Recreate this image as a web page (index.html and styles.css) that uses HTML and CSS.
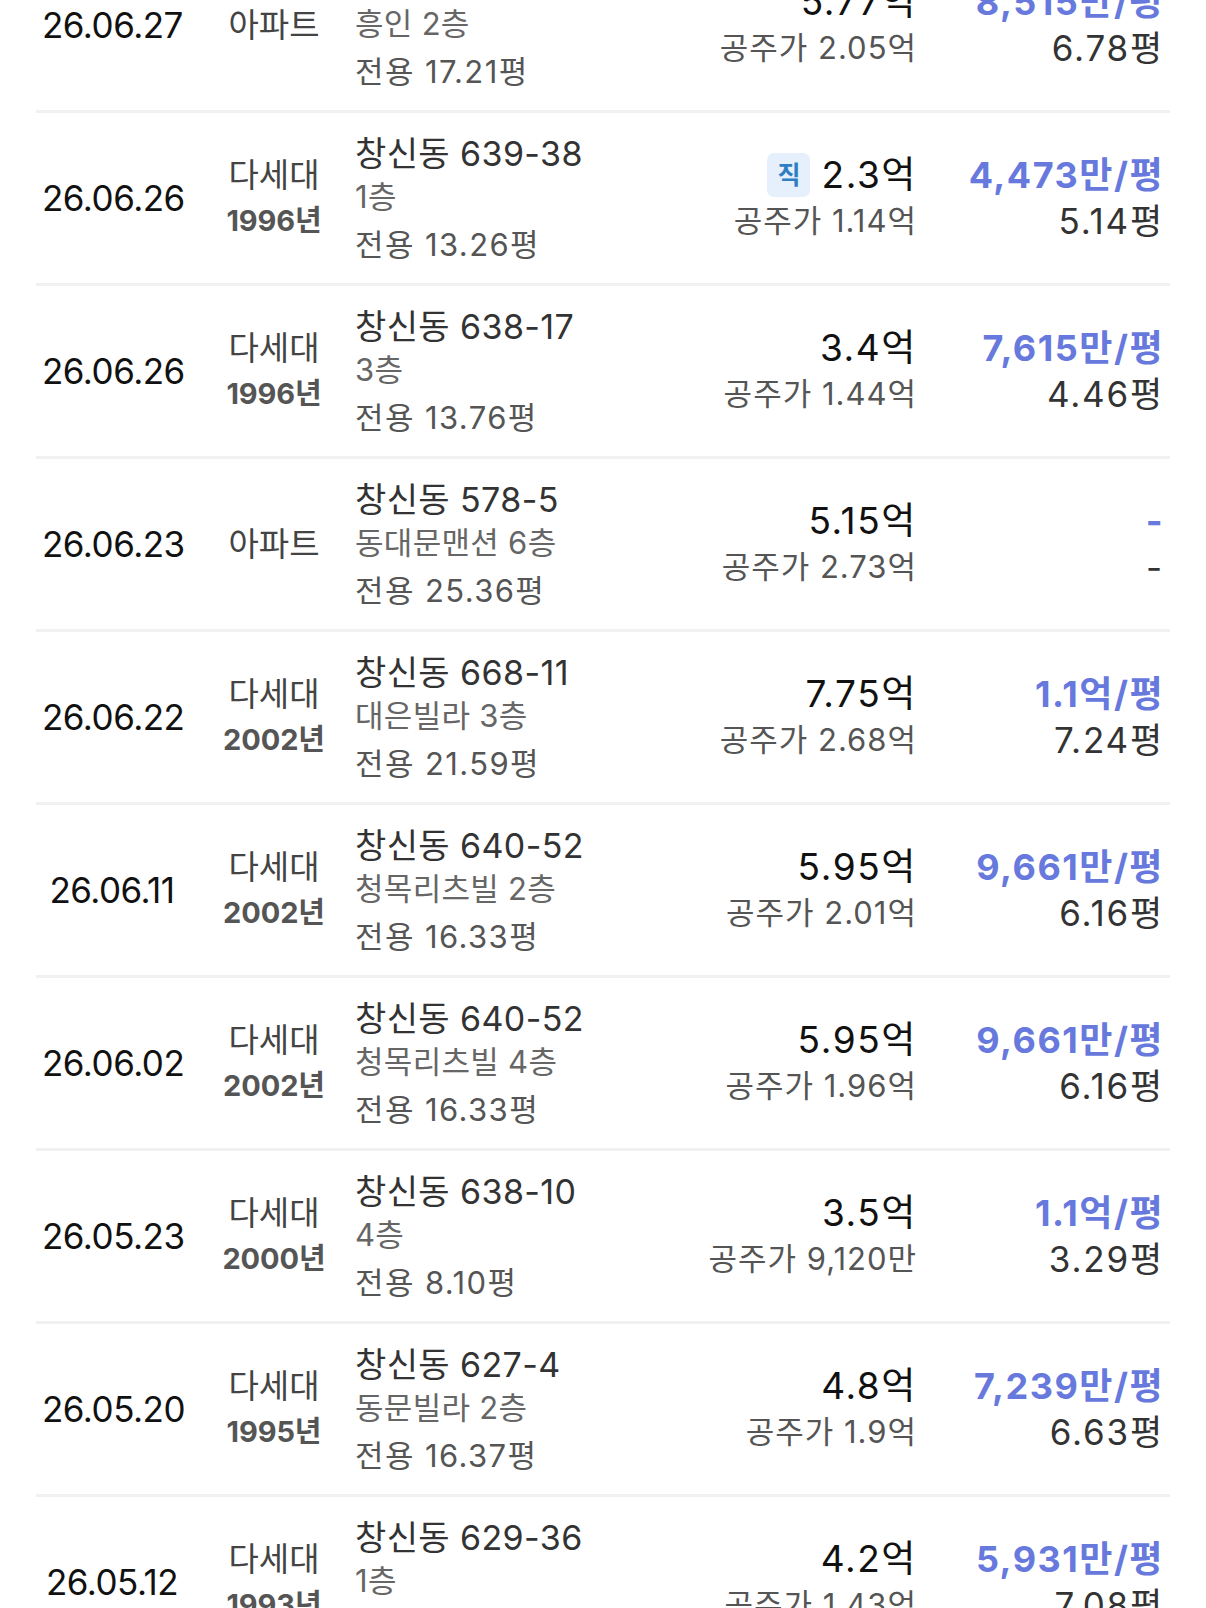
FILE: index.html
```html
<!DOCTYPE html>
<html lang="ko">
<head>
<meta charset="utf-8">
<title>실거래가 목록</title>
<link rel="stylesheet" href="styles.css">
</head>
<body>
<div class="list">
  <div class="row">
    <div class="c-date">26.06.27</div>
    <div class="c-type"><div class="type">아파트</div></div>
    <div class="c-addr"><div class="a1">창신동 703</div><div class="a2">흥인 2층</div><div class="a3">전용 17.21평</div></div>
    <div class="c-price"><div class="p1">5.77억</div><div class="p2">공주가 2.05억</div></div>
    <div class="c-ppy"><div class="u1">8,515만/평</div><div class="u2">6.78평</div></div>
  </div>
  <div class="row">
    <div class="c-date">26.06.26</div>
    <div class="c-type"><div class="type">다세대</div><div class="year">1996년</div></div>
    <div class="c-addr"><div class="a1">창신동 639-38</div><div class="a2">1층</div><div class="a3">전용 13.26평</div></div>
    <div class="c-price"><div class="p1"><span class="badge">직</span>2.3억</div><div class="p2">공주가 1.14억</div></div>
    <div class="c-ppy"><div class="u1">4,473만/평</div><div class="u2">5.14평</div></div>
  </div>
  <div class="row">
    <div class="c-date">26.06.26</div>
    <div class="c-type"><div class="type">다세대</div><div class="year">1996년</div></div>
    <div class="c-addr"><div class="a1">창신동 638-17</div><div class="a2">3층</div><div class="a3">전용 13.76평</div></div>
    <div class="c-price"><div class="p1">3.4억</div><div class="p2">공주가 1.44억</div></div>
    <div class="c-ppy"><div class="u1">7,615만/평</div><div class="u2">4.46평</div></div>
  </div>
  <div class="row">
    <div class="c-date">26.06.23</div>
    <div class="c-type"><div class="type">아파트</div></div>
    <div class="c-addr"><div class="a1">창신동 578-5</div><div class="a2">동대문맨션 6층</div><div class="a3">전용 25.36평</div></div>
    <div class="c-price"><div class="p1">5.15억</div><div class="p2">공주가 2.73억</div></div>
    <div class="c-ppy"><div class="u1">-</div><div class="u2">-</div></div>
  </div>
  <div class="row">
    <div class="c-date">26.06.22</div>
    <div class="c-type"><div class="type">다세대</div><div class="year">2002년</div></div>
    <div class="c-addr"><div class="a1">창신동 668-11</div><div class="a2">대은빌라 3층</div><div class="a3">전용 21.59평</div></div>
    <div class="c-price"><div class="p1">7.75억</div><div class="p2">공주가 2.68억</div></div>
    <div class="c-ppy"><div class="u1">1.1억/평</div><div class="u2">7.24평</div></div>
  </div>
  <div class="row">
    <div class="c-date">26.06.11</div>
    <div class="c-type"><div class="type">다세대</div><div class="year">2002년</div></div>
    <div class="c-addr"><div class="a1">창신동 640-52</div><div class="a2">청목리츠빌 2층</div><div class="a3">전용 16.33평</div></div>
    <div class="c-price"><div class="p1">5.95억</div><div class="p2">공주가 2.01억</div></div>
    <div class="c-ppy"><div class="u1">9,661만/평</div><div class="u2">6.16평</div></div>
  </div>
  <div class="row">
    <div class="c-date">26.06.02</div>
    <div class="c-type"><div class="type">다세대</div><div class="year">2002년</div></div>
    <div class="c-addr"><div class="a1">창신동 640-52</div><div class="a2">청목리츠빌 4층</div><div class="a3">전용 16.33평</div></div>
    <div class="c-price"><div class="p1">5.95억</div><div class="p2">공주가 1.96억</div></div>
    <div class="c-ppy"><div class="u1">9,661만/평</div><div class="u2">6.16평</div></div>
  </div>
  <div class="row">
    <div class="c-date">26.05.23</div>
    <div class="c-type"><div class="type">다세대</div><div class="year">2000년</div></div>
    <div class="c-addr"><div class="a1">창신동 638-10</div><div class="a2">4층</div><div class="a3">전용 8.10평</div></div>
    <div class="c-price"><div class="p1">3.5억</div><div class="p2">공주가 9,120만</div></div>
    <div class="c-ppy"><div class="u1">1.1억/평</div><div class="u2">3.29평</div></div>
  </div>
  <div class="row">
    <div class="c-date">26.05.20</div>
    <div class="c-type"><div class="type">다세대</div><div class="year">1995년</div></div>
    <div class="c-addr"><div class="a1">창신동 627-4</div><div class="a2">동문빌라 2층</div><div class="a3">전용 16.37평</div></div>
    <div class="c-price"><div class="p1">4.8억</div><div class="p2">공주가 1.9억</div></div>
    <div class="c-ppy"><div class="u1">7,239만/평</div><div class="u2">6.63평</div></div>
  </div>
  <div class="row">
    <div class="c-date">26.05.12</div>
    <div class="c-type"><div class="type">다세대</div><div class="year">1993년</div></div>
    <div class="c-addr"><div class="a1">창신동 629-36</div><div class="a2">1층</div><div class="a3">전용 10.21평</div></div>
    <div class="c-price"><div class="p1">4.2억</div><div class="p2">공주가 1.43억</div></div>
    <div class="c-ppy"><div class="u1">5,931만/평</div><div class="u2">7.08평</div></div>
  </div>
</div>
</body>
</html>
```

FILE: styles.css
```css
html, body {
  margin: 0;
  padding: 0;
  background: #ffffff;
}
body {
  font-family: Inter, "Noto Sans CJK KR", sans-serif;
  color: #111111;
  overflow: hidden;
}
.list {
  margin: -60px 36px 0 36px;
}
.row {
  display: flex;
  align-items: center;
  height: 170px;
  border-bottom: 3px solid #f1f1f1;
  padding: 0 6px 0 6px;
}
.c-date {
  width: 140px;
  text-align: center;
  font-size: 35px;
  color: #111111;
  letter-spacing: -0.5px;
}
.c-type {
  width: 104px;
  margin-left: 40px;
  text-align: center;
}
.type {
  font-size: 33px;
  line-height: 46px;
  color: #444444;
}
.year {
  font-size: 29px;
  line-height: 46px;
  font-weight: 700;
  color: #555555;
  letter-spacing: -0.1px;
}
.c-addr {
  flex: 1;
  margin-left: 29px;
  padding-top: 8px;
}
.a1 {
  font-size: 34px;
  line-height: 40px;
  color: #333333;
  letter-spacing: 0.4px;
}
.a2 {
  font-size: 31px;
  line-height: 46px;
  color: #666666;
  letter-spacing: 0.3px;
}
.a3 {
  font-size: 31px;
  line-height: 50px;
  color: #555555;
  letter-spacing: 1.4px;
}
.c-price {
  text-align: right;
}
.p1 {
  font-size: 37px;
  line-height: 46px;
  color: #111111;
  letter-spacing: 1.6px;
  display: flex;
  justify-content: flex-end;
  align-items: center;
}
.p2 {
  font-size: 31px;
  line-height: 46px;
  color: #555555;
  letter-spacing: 1px;
}
.badge {
  display: inline-flex;
  align-items: center;
  justify-content: center;
  width: 43px;
  height: 44px;
  border-radius: 7px;
  background: #e5f0fc;
  color: #2f7dc3;
  font-size: 25px;
  font-weight: 700;
  letter-spacing: 0;
  margin-right: 11px;
}
.c-ppy {
  width: 247px;
  text-align: right;
}
.u1 {
  font-size: 36px;
  line-height: 46px;
  font-weight: 700;
  color: #6779dc;
  letter-spacing: 1.5px;
}
.u2 {
  font-size: 35px;
  line-height: 46px;
  color: #333333;
  letter-spacing: 1.8px;
}
```
